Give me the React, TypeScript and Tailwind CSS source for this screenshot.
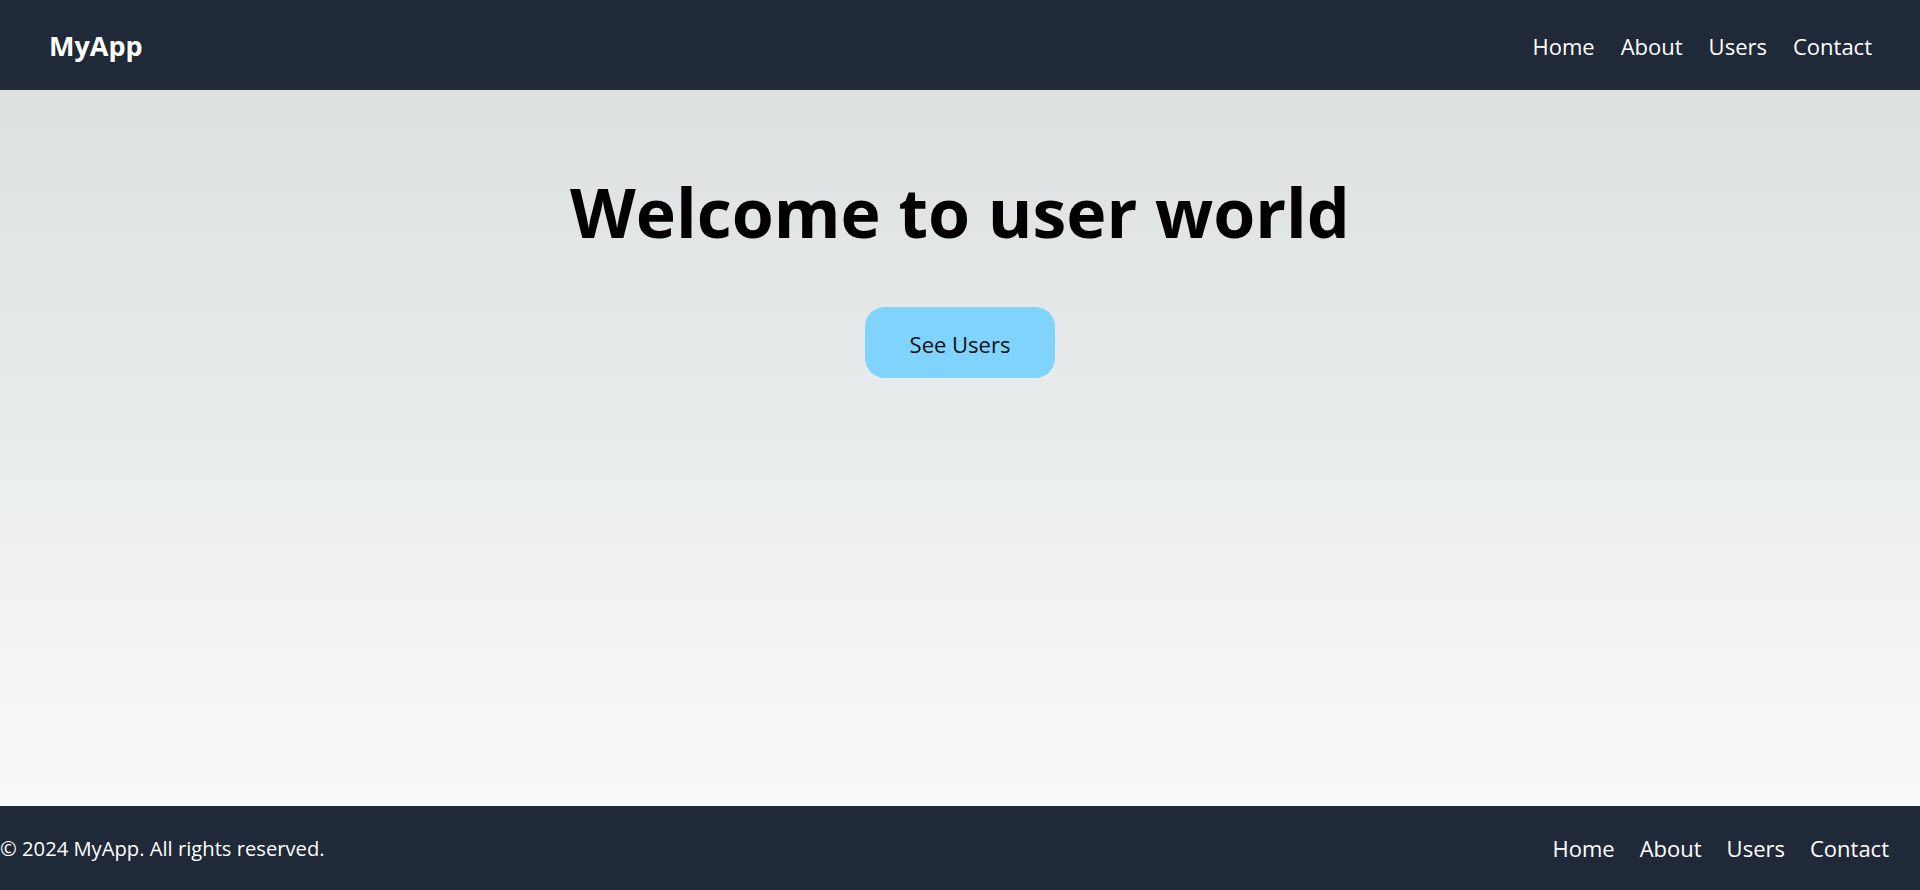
export default function App() {
  const links = ["Home", "About", "Users", "Contact"];
  return (
    <div className="flex min-h-screen flex-col font-['Open_Sans',sans-serif]">
      <header className="flex h-[90px] items-center justify-between bg-[#1f2937] pl-[49px] pr-[48px] text-white">
        <span className="pt-[2px] text-[27px] font-bold">MyApp</span>
        <nav className="flex gap-[26px] pt-[2px] text-[22px]">
          {links.map((l) => (
            <a key={l} href="#">
              {l}
            </a>
          ))}
        </nav>
      </header>
      <main className="flex flex-1 flex-col items-center bg-gradient-to-b from-[#dce0e1] to-[#f8faf9] pt-[88px]">
        <h1 className="text-[68px] font-bold leading-none text-black">
          Welcome to user world
        </h1>
        <button className="mt-[61px] h-[71px] w-[190px] rounded-[20px] bg-[#7fd3fd] pt-[4px] text-[22px] text-[#111]">
          See Users
        </button>
      </main>
      <footer className="flex h-[84px] items-center justify-between bg-[#1f2937] pr-[31px] text-white">
        <p className="text-[20.2px]">© 2024 MyApp. All rights reserved.</p>
        <nav className="flex gap-[25px] text-[22px]">
          {links.map((l) => (
            <a key={l} href="#">
              {l}
            </a>
          ))}
        </nav>
      </footer>
    </div>
  );
}
